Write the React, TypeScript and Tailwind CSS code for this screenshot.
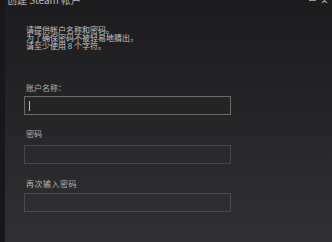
import { useState } from "react";

const font = { fontFamily: '"Noto Sans CJK SC", "Liberation Sans", sans-serif' };

export default function App() {
  const [name, setName] = useState("");

  return (
    <div
      className="flex h-[242px] w-[332px] overflow-hidden bg-gradient-to-b from-[#1c1c1e] to-[#303032] text-[#c4c4c4]"
      style={font}
    >
      <div className="w-[5px] shrink-0 bg-[#18181a]" />
      <div className="flex-1">
        {/* title bar, clipped at top */}
        <div className="flex h-[14px] items-start justify-between pr-[4px]">
          <div className="-mt-[6px] pl-[2px] text-[10px] leading-[12px] text-[#bdbdbd]">
            创建 Steam 帐户
          </div>
          <div className="-mt-[3px] flex items-start gap-[5px] text-[#9a9a9a]">
            <div className="mt-[3px] h-[1px] w-[7px] bg-[#9a9a9a]" />
            <svg width="7" height="6" viewBox="0 0 7 6">
              <path d="M0 0 L7 7 M7 0 L0 7" stroke="#9a9a9a" strokeWidth="1.2" />
            </svg>
          </div>
        </div>

        <div className="pl-[21px] pt-[12px]">
          <div className="text-[8px] leading-[8px] text-[#c6c6c6]">
            <p>请提供帐户名称和密码。</p>
            <p>为了确保密码不被轻易地猜出，</p>
            <p>请至少使用 8 个字符。</p>
          </div>

          <label className="mt-[33px] block text-[8px] leading-[9px] text-[#b4b4b4]">账户名称：</label>
          <div className="-ml-[2px] mt-[4px] flex h-[19px] w-[207px] items-center border border-[#6a6a6a] bg-[#242426] px-[4px]">
            <input
              value={name}
              onChange={(e) => setName(e.target.value)}
              className="h-full w-full bg-transparent text-[8px] text-[#d0d0d0] outline-none"
            />
            <div className="absolute h-[10px] w-[1px] bg-[#bdbdbd]" />
          </div>

          <label className="mt-[14px] block text-[8px] leading-[9px] text-[#b4b4b4]">密码</label>
          <div className="-ml-[2px] mt-[7px] h-[19px] w-[207px] border border-[#474749] bg-[#2a2a2c]" />

          <label className="mt-[15px] block text-[8px] leading-[9px] tracking-[0.5px] text-[#b4b4b4]">再次输入密码</label>
          <div className="-ml-[2px] mt-[5px] h-[19px] w-[207px] border border-[#4b4b4d] bg-[#2d2d2f]" />
        </div>
      </div>
    </div>
  );
}
